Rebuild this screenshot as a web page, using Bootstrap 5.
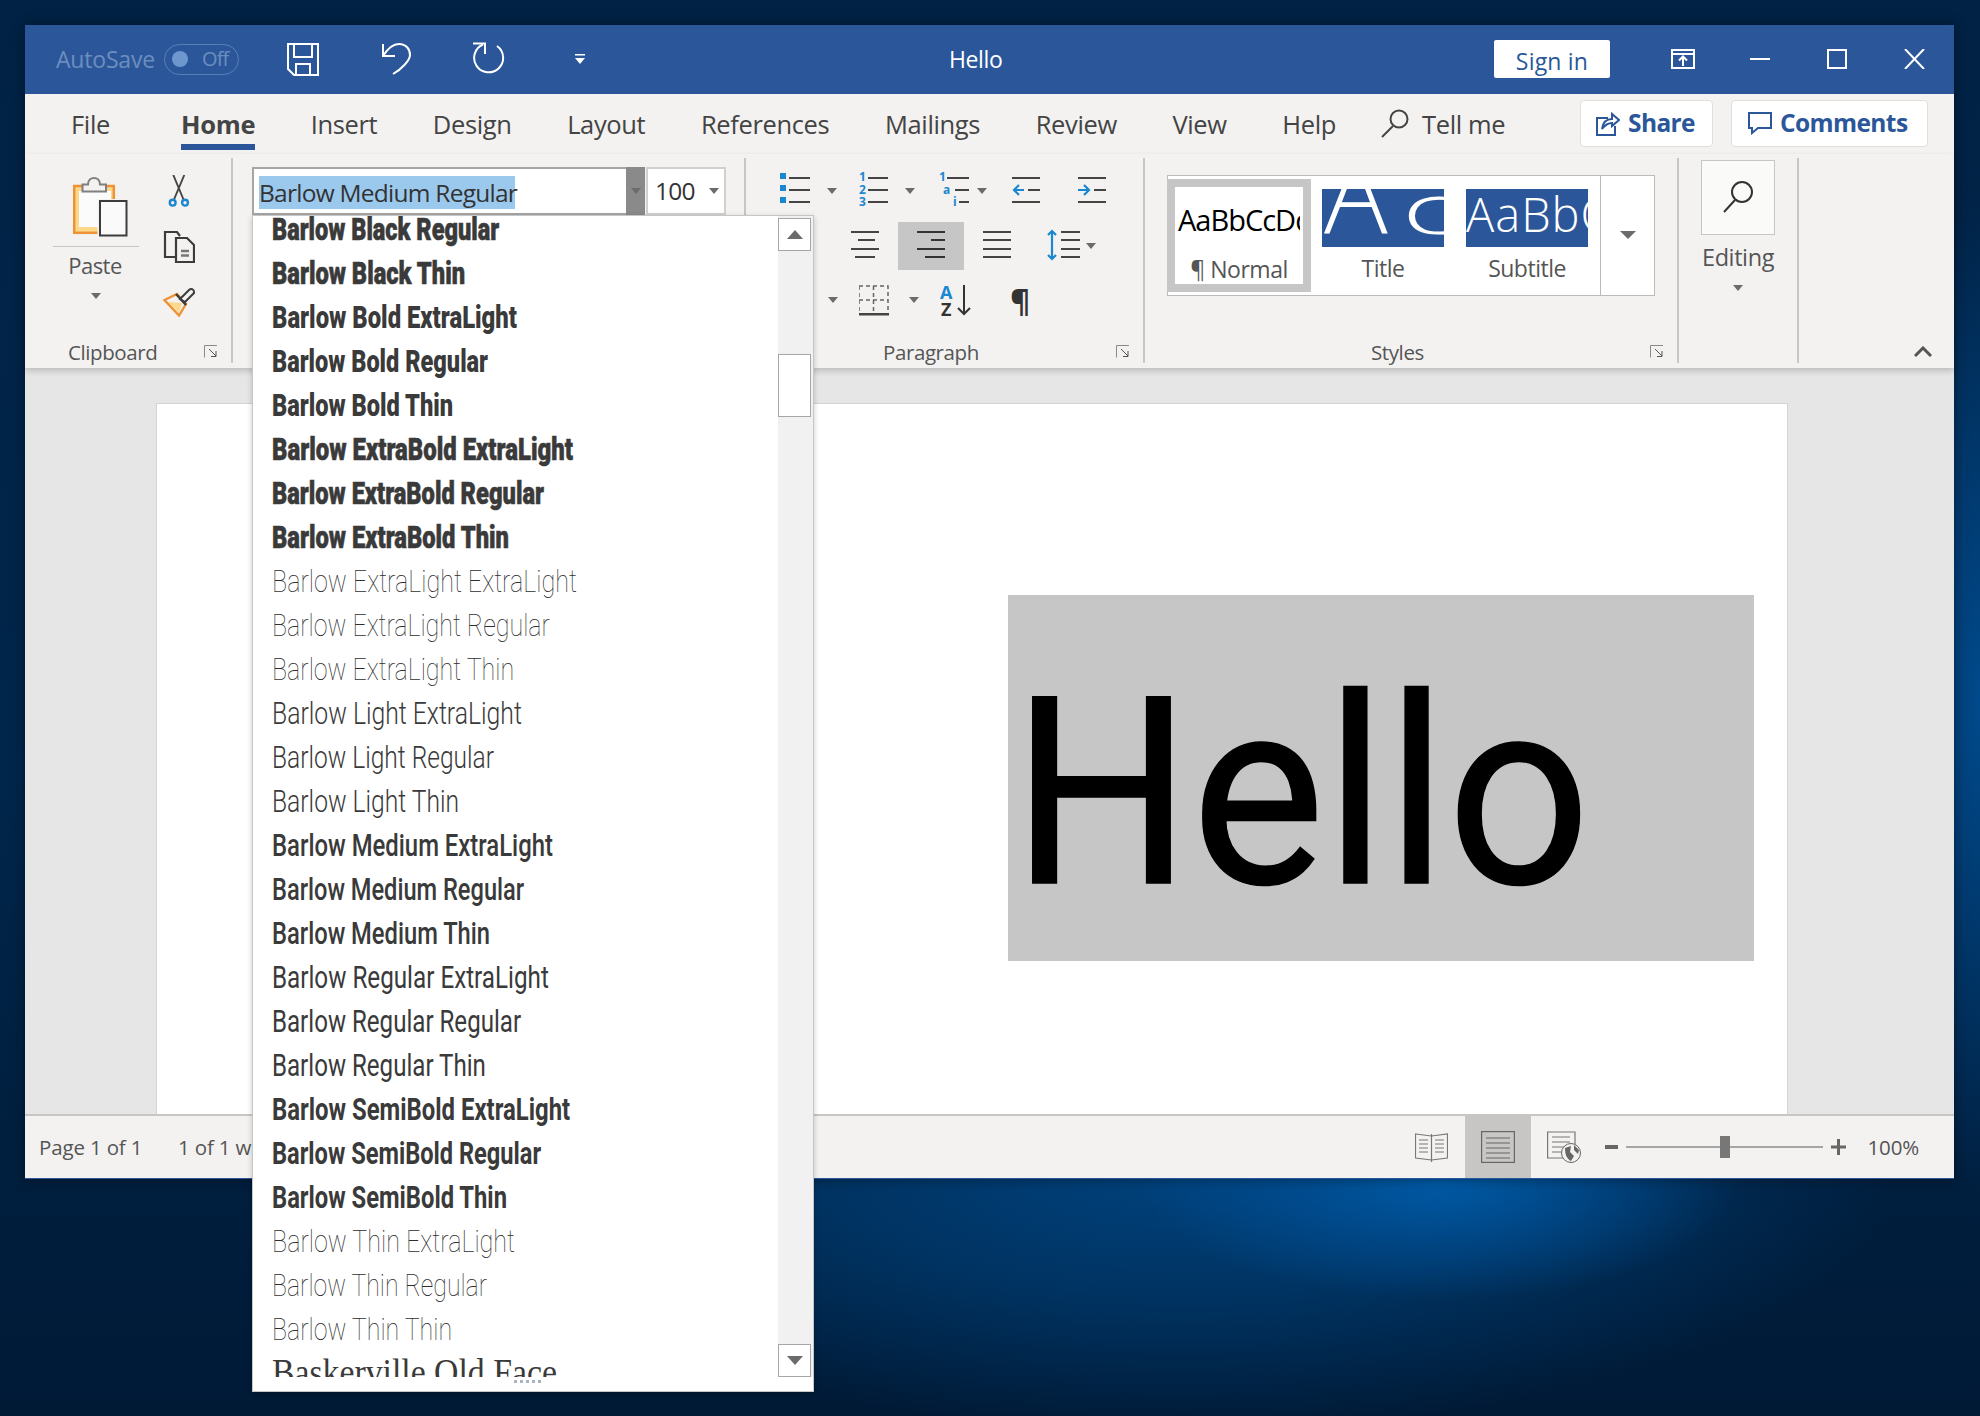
<!doctype html>
<html lang="en"><head>
<meta charset="utf-8"/>
<title>Hello - Word</title>
<link href="https://cdn.jsdelivr.net/npm/bootstrap@5.3.2/dist/css/bootstrap.min.css" rel="stylesheet">
<style>
html,body{height:100%}
body{width:1980px;height:1416px;overflow:hidden;padding:25px 26px 0 25px;font-family:"Open Sans","Noto Sans",sans-serif;color:#444;
 background:
  radial-gradient(ellipse 300px 120px at 1440px 1180px,#005aa6 0%,rgba(0,85,160,.55) 50%,rgba(0,70,135,0) 100%),
  radial-gradient(ellipse 720px 260px at 1180px 1170px,rgba(0,66,125,1) 0%,rgba(0,58,110,.75) 50%,rgba(0,40,80,0) 100%),
  radial-gradient(ellipse 110px 500px at 1980px 700px,#004a8c 0%,rgba(0,60,120,0) 100%),
  linear-gradient(180deg,#012245 0%,#00264b 55%,#001a36 100%)}
.wd-window{position:relative;height:1154px;background:#f3f2f1;box-shadow:0 0 12px rgba(0,0,0,.4);border-bottom:1px solid #2b579a}
.wd-title{height:69px;background:#2b579a;color:#fff}
.auto-txt{margin-left:31px;width:108px;font-size:23px;letter-spacing:-.2px;color:#6c8ebf;white-space:nowrap}
.auto-tog{width:75px;height:31px;border:1px solid #5a7fb5;border-radius:16px;color:#6c8ebf;font-size:20px;letter-spacing:-.9px;padding-left:7px}
.auto-dot{width:16px;height:16px;border-radius:50%;background:#6d97cd;margin-right:14px}
.qat-1{margin-left:48px}.qat-2{margin-left:63px}.qat-3{margin-left:61px}.qat-4{margin-left:69px}
.doc-name{margin-left:364px;width:545px;font-size:23px;letter-spacing:-.4px}
.signin{width:116px;height:38px;background:#fff;color:#2b579a;border-radius:2px;font-size:23px;letter-spacing:.2px;line-height:43px}
.tb-ctl-1{margin-left:61px}.tb-ctl-2{margin-left:55px}.tb-ctl-3{margin-left:57px}.tb-ctl-4{margin-left:57px}
.wd-tabs{height:60px;font-size:25.500px;letter-spacing:-.35px}
.wd-tab{height:56px;line-height:60px;border-bottom:6px solid transparent;margin-left:55.500px;color:#444}
.wd-tab.first{margin-left:46px}
.wd-tab.second{margin-left:71px}
.wd-tab.active{font-weight:700;border-bottom-color:#2b579a;letter-spacing:-.3px}
.tell-ico{margin:0 13px 0 45px}
.top-btn{height:47px;margin-top:6px;background:#fff;border:1px solid #e1dfdd;border-radius:4px;color:#2b579a;font-weight:700;font-size:24.5px;letter-spacing:-.6px}
.share-b{width:133px;margin-left:auto;margin-right:18px;padding-left:14px}
.comm-b{width:197px;margin-right:26px;padding-left:16px}
.wd-ribbon{height:214px;padding:4px 0 5px;box-shadow:0 3px 6px rgba(0,0,0,.18);position:relative}
.rb-group{border-right:2px solid #c8c6c4;flex:none}
.rb-body{flex:1 1 auto;min-height:0}
.rb-foot{height:20px;margin-bottom:1px;font-size:20.500px;line-height:20px;letter-spacing:-.4px;color:#555;padding-right:13px;align-items:center}
.launch{margin-left:auto}
.g-clip{width:208px}.g-font{width:513px}.g-para{width:399px}.g-style{width:534px}.g-edit{width:120px}
.f-clip{padding-left:43px}.f-para{padding-left:137px}.f-style{padding-left:226px}
.paste-col{width:86px;margin-left:28px;padding-top:19px;font-size:22px;letter-spacing:-.5px;color:#555}
.paste-col hr{width:86px;margin:8px 0 7px;opacity:1;border-color:#c8c6c4}
.paste-lab{margin-left:-2px}
.clip-col{margin-left:24px;padding-top:17px;gap:23px}
.rb-caret{width:0;height:0;border-left:5px solid transparent;border-right:5px solid transparent;border-top:6px solid #6b6b6b}
.paste-col .rb-caret{margin-top:17px}
.font-box{margin:9px 0 0 19px;height:48px}
.font-name{width:374px;height:48px;background:#fff;border:2px solid #a6a6a6;border-right:0;padding:6px 0 0 5px;font-size:24.5px;letter-spacing:-.75px;color:#333}
.font-sel{background:#9bc9ee;display:inline-block;height:33px;line-height:33px;width:256px;white-space:nowrap}
.font-drop{width:19px;background:#8a8a8a}
.font-size{width:80px;margin-left:1px;background:#fff;border:2px solid #d0d0d0;font-size:24.5px;letter-spacing:-.8px;color:#333;padding:0 5px 0 7px}
.p-row1{margin:13px 0 0 34px;height:36px}
.p-row2{margin:15px 0 0 105px;height:48px}
.p-row3{margin:13px 0 0 82px;height:34px}
.pilcrow{font-size:31px;line-height:34px;font-weight:700;color:#333;margin-left:38px}
.svg-txt{font-family:"Open Sans",sans-serif;font-weight:700}
.gallery{width:488px;height:121px;margin:17px 0 0 22px;background:#fff;border:1px solid #bdbbb9}
.tile{flex:none;color:#555;text-align:center}
.tile-sel{width:144px;height:113px;margin:3px 0 0 -1px;border:8px solid #c6c6c6;overflow:hidden}
.smp-normal{height:56px;line-height:66px;font-size:29px;letter-spacing:-1px;color:#000;white-space:nowrap;overflow:hidden;margin:0 3px;text-align:left}
.tile-lab{font-size:23px;letter-spacing:-.5px;line-height:30px}
.tile-sel .tile-lab{margin-top:11px}
.tile-title{width:122px;margin:13px 0 0 11px}
.tile-sub{width:122px;margin:13px 0 0 22px}
.smp-box{height:58px;background:#2b579a;color:#fff;overflow:hidden;white-space:nowrap;text-align:left;font-weight:300;margin-bottom:6px}
.smp-title{font-size:106px;line-height:4px;padding-left:2px;padding-top:2px}
.smp-title span{display:inline-block;font-size:70px;transform:scaleX(1.700);transform-origin:0 100%;margin-left:14px}
.smp-sub{font-size:47px;line-height:50px;letter-spacing:1px;font-weight:300}
.more-b{width:55px;margin-left:12px;border-left:1px solid #bdbbb9}
.more-b .rb-caret{border-left-width:8px;border-right-width:8px;border-top-width:8px}
.edit-btn{width:74px;height:75px;background:#fafaf9;border:1px solid #c6c6c6;margin-top:2px}
.edit-lab{font-size:23.500px;letter-spacing:-.4px;margin-top:6px;color:#555;line-height:32px}
.edit-col .rb-caret{margin-top:12px}
.g-last{padding:0 22px 6px 0}
.wd-doc{height:747px;background:#e6e6e6;overflow:hidden}
.wd-page{height:712px;margin:35px 166px 0 131px;background:#fff;border:1px solid #d4d4d4;border-bottom:0;padding:191px 33px 0 0}
.hello-bg{width:746px;height:366px;background:#c6c6c6;color:#000;font-family:Roboto,"Liberation Sans",sans-serif;font-weight:400;font-size:262px;line-height:366px;padding-left:4px;overflow:hidden}
.hello-bg span{display:inline-block;transform:scaleX(.96);transform-origin:0 50%;margin-top:16px;-webkit-text-stroke:1.500px #000}
.wd-status{height:64px;border-top:2px solid #c8c6c4;font-size:20.500px;letter-spacing:-.15px;color:#555}
.st-page{margin-left:14px;width:139px}
.st-act{width:66px;height:62px;background:#c8c6c4}
.st-read{margin-right:17px}
.st-web{margin:0 24px 0 16px}
.zoom-track{width:197px;height:2px;margin:0 8px;background:#a6a6a6;position:relative}
.zoom-thumb{position:absolute;left:94px;top:-10px;width:10px;height:22px;background:#777}
.zoom-pct{margin:0 35px 0 21px}
.font-list{position:absolute;left:227px;top:190px;width:562px;height:1177px;background:#fff;border:1px solid #c6c6c6;box-shadow:0 2px 6px rgba(0,0,0,.2)}
.fl-pane{height:1161px}
.fl-rows{flex:1 1 auto;overflow:hidden;margin:0;padding:0 0 0 19px;list-style:none}
.fl-rows li{height:44px;line-height:44px;white-space:nowrap;color:#3a3a3a;font-family:Roboto,sans-serif;font-size:32px}
.fl-rows li:first-child{margin-top:-9px}
.fl-rows li span{display:inline-block;transform-origin:0 50%}
.fl-rows li.fl-heavy span{-webkit-text-stroke:.6px #3a3a3a}
.fl-rows li.fl-thin{color:#2e2e2e}
.fl-rows li.fl-serif{font-family:"Liberation Serif",serif;font-size:37px}
.fl-bar{width:35px;background:#f1f1f1;padding:2px 2px 0 0;flex:none}
.sb-btn{height:33px;background:#fff;border:1px solid #a6a6a6;flex:none}
.sb-thumb{height:63px;background:#fff;border:1px solid #a6a6a6;margin:103px 0 auto}
.sb-up{width:0;height:0;border:8px solid transparent;border-top:0;border-bottom:9px solid #6b6b6b}
.sb-dn{width:0;height:0;border:8px solid transparent;border-bottom:0;border-top:9px solid #6b6b6b}
.fl-grip{height:14px;gap:3px;padding:3px 0 0 261px}
.fl-grip i{width:3px;height:3px;background:#a9b4c2}
</style>
</head><body>
<div class="wd-window d-flex flex-column">

  <div class="wd-title d-flex align-items-center flex-none">
    <div class="auto-txt">AutoSave</div>
    <div class="auto-tog d-flex align-items-center"><span class="auto-dot"></span>Off</div>
    <svg class="qat-1" width="32" height="33" viewBox="0 0 32 33" fill="none" stroke="#fff" stroke-width="2"><path d="M1 1H31V32H7L1 26Z"/><path d="M7 1V14H25V1"/><path d="M9 32V21H23V32"/></svg>
    <svg class="qat-2" width="29" height="34" viewBox="0 0 29 34" fill="none" stroke="#fff" stroke-width="2"><path d="M1 2V14H13"/><path d="M1 14C6 6 11 2 17 2C24 2 28 7 28 13C28 18 20 27 11 32"/></svg>
    <svg class="qat-3" width="34" height="34" viewBox="0 0 34 34" fill="none" stroke="#fff" stroke-width="2"><path d="M1 1.500H13V12"/><path d="M25 4A14.500 14.500 0 1 1 11 2.500"/></svg>
    <svg class="qat-4" width="10" height="10" viewBox="0 0 10 10" fill="#fff"><rect width="10" height="1.500"/><path d="M0 4H10L5 10Z"/></svg>
    <div class="doc-name">Hello</div>
    <div class="signin text-center">Sign in</div>
    <svg class="tb-ctl-1" width="24" height="20" viewBox="0 0 24 20" fill="none" stroke="#fff" stroke-width="2"><rect x="1" y="1" width="22" height="18"/><path d="M1 5H23M12 17V8M8 11.500L12 7.500L16 11.500"/></svg>
    <svg class="tb-ctl-2" width="20" height="2" viewBox="0 0 20 2"><rect width="20" height="2" fill="#fff"/></svg>
    <svg class="tb-ctl-3" width="20" height="20" viewBox="0 0 20 20" fill="none" stroke="#fff" stroke-width="2"><rect x="1" y="1" width="18" height="18"/></svg>
    <svg class="tb-ctl-4" width="21" height="20" viewBox="0 0 21 20" fill="none" stroke="#fff" stroke-width="2"><path d="M1 0L20 20M20 0L1 20"/></svg>
  </div>

  <div class="wd-tabs d-flex flex-none">
    <div class="wd-tab first">File</div>
    <div class="wd-tab second active">Home</div>
    <div class="wd-tab">Insert</div>
    <div class="wd-tab">Design</div>
    <div class="wd-tab">Layout</div>
    <div class="wd-tab">References</div>
    <div class="wd-tab">Mailings</div>
    <div class="wd-tab">Review</div>
    <div class="wd-tab">View</div>
    <div class="wd-tab">Help</div>
    <svg class="tell-ico align-self-center" width="28" height="30" viewBox="0 0 28 30" fill="none" stroke="#444" stroke-width="2"><circle cx="18" cy="10" r="8.500"/><path d="M12 17L1 28"/></svg>
    <div class="wd-tab ms-0">Tell me</div>
    <div class="top-btn share-b d-flex align-items-center gap-2">
      <svg width="25" height="28" viewBox="0 0 25 28" fill="none" stroke="#2b579a" stroke-width="2"><path d="M13 9H2V26H20V17"/><path d="M7 20C8 13 12 10 17 10V5L24 11L17 17V14C13 14 10 16 7 20Z"/></svg>Share
    </div>
    <div class="top-btn comm-b d-flex align-items-center gap-2">
      <svg width="24" height="24" viewBox="0 0 24 24" fill="none" stroke="#2b579a" stroke-width="2"><path d="M1 2H23V17H10L4 22V17H1Z"/></svg>Comments
    </div>
  </div>

  <div class="wd-ribbon d-flex flex-none">
    <div class="rb-group g-clip d-flex flex-column">
      <div class="rb-body d-flex">
        <div class="paste-col d-flex flex-column align-items-center">
          <svg width="55" height="61" viewBox="0 0 55 61" class="ms-2">
            <rect x="1.200" y="9" width="39.600" height="46.800" fill="#fbd88c" stroke="#ed9236" stroke-width="2.500"/>
            <rect x="6" y="14" width="32" height="36" fill="#fbfbfb"/>
            <path d="M9.500 14.500V7.500H15C15 3 18 1 21 1C24 1 27 3 27 7.500H33V14.500Z" fill="#f3f2f1" stroke="#7f7f7f" stroke-width="2"/>
            <rect x="24.500" y="22" width="30" height="38" fill="#f3f2f1"/>
            <rect x="27" y="24" width="26.500" height="34.500" fill="#fafafa" stroke="#3c3c3c" stroke-width="2"/>
          </svg>
          <hr>
          <div class="lh-1 paste-lab">Paste</div>
          <div class="rb-caret"></div>
        </div>
        <div class="clip-col d-flex flex-column align-items-center">
          <svg width="22" height="32" viewBox="0 0 22 32" fill="none"><path d="M5.300 0L15.500 24.500M16.300 0L6 24.500" stroke="#444" stroke-width="1.900"/><circle cx="4.700" cy="27.700" r="2.900" stroke="#1b87d0" stroke-width="2.400"/><circle cx="17" cy="27.700" r="2.900" stroke="#1b87d0" stroke-width="2.400"/></svg>
          <svg width="32" height="33" viewBox="0 0 32 33" fill="none" stroke="#3c3c3c" stroke-width="2.200"><path d="M12 27H2V2H14L17 6"/><path d="M13 8H24L31 15V32H13Z"/><path d="M18 21H26M18 25.500H26" stroke="#777" stroke-width="2.400"/></svg>
          <svg width="32" height="31" viewBox="0 0 32 31"><path d="M5 16L19 17L16 27Z" fill="#fbd88c"/><path d="M1.500 14L14 8L23 18L16 29.500Z" fill="none" stroke="#ed9236" stroke-width="2.400"/><path d="M17 13L26 4C28 2 31 3 31 6V7L22 16Z" fill="#f3f2f1" stroke="#3c3c3c" stroke-width="2"/><path d="M13 8L23 19" stroke="#3c3c3c" stroke-width="2.400"/></svg>
        </div>
      </div>
      <div class="rb-foot d-flex f-clip">Clipboard
        <svg class="launch" width="14" height="13" viewBox="0 0 14 13" fill="none" stroke="#8a8a8a"><path d="M13 .5H.5V12.500"/><path d="M5 4L12 11M12 6V11.500H7" stroke="#555"/></svg>
      </div>
    </div>

    <div class="rb-group g-font">
      <div class="font-box d-flex">
        <div class="font-name"><span class="font-sel">Barlow Medium Regular</span></div>
        <div class="font-drop d-flex align-items-center justify-content-center"><div class="rb-caret"></div></div>
        <div class="font-size d-flex align-items-center justify-content-between">100<div class="rb-caret"></div></div>
      </div>
    </div>

    <div class="rb-group g-para d-flex flex-column">
      <div class="rb-body">
        <div class="p-row1 d-flex">
          <svg width="78" height="36" viewBox="0 0 78 36"><g fill="#1b87d0"><rect y="2" width="6" height="6"/><rect y="14" width="6" height="6"/><rect y="26" width="6" height="6"/></g><g fill="#444"><rect x="9" y="6" width="21" height="2"/><rect x="9" y="18" width="21" height="2"/><rect x="9" y="30" width="21" height="2"/><path d="M47 17H57L52 23Z" fill="#6b6b6b"/></g></svg>
          <svg width="80" height="36" viewBox="0 0 80 36"><g class="svg-txt" fill="#1b87d0" font-size="12"><text x="1" y="10">1</text><text x="1" y="23">2</text><text x="1" y="35">3</text></g><g fill="#444"><rect x="10" y="6" width="20" height="2"/><rect x="10" y="18" width="20" height="2"/><rect x="10" y="30" width="20" height="2"/><path d="M47 17H57L52 23Z" fill="#6b6b6b"/></g></svg>
          <svg width="74" height="36" viewBox="0 0 74 36"><g class="svg-txt" fill="#1b87d0" font-size="12"><text x="1" y="10">1</text><text x="5" y="23">a</text><text x="15" y="35">i</text></g><g fill="#444"><rect x="9" y="6" width="22" height="2"/><rect x="17" y="18" width="14" height="2"/><rect x="21" y="30" width="10" height="2"/><path d="M39 17H49L44 23Z" fill="#6b6b6b"/></g></svg>
          <svg width="66" height="36" viewBox="0 0 66 36"><g fill="#444"><rect y="6" width="28" height="2"/><rect x="16" y="18" width="12" height="2"/><rect y="30" width="28" height="2"/></g><path d="M12 19H2M7 14L2 19L7 24" fill="none" stroke="#1b87d0" stroke-width="2.200"/></svg>
          <svg width="28" height="36" viewBox="0 0 28 36"><g fill="#444"><rect y="6" width="28" height="2"/><rect x="16" y="18" width="12" height="2"/><rect y="30" width="28" height="2"/></g><path d="M0 19H11M6 14L11 19L6 24" fill="none" stroke="#1b87d0" stroke-width="2.200"/></svg>
        </div>
        <div class="p-row2 d-flex">
          <svg width="47" height="48" viewBox="0 0 47 48" fill="#444"><rect y="9" width="28" height="2"/><rect x="7" y="17" width="17" height="2"/><rect y="26" width="28" height="2"/><rect x="4" y="34" width="20" height="2"/></svg>
          <svg width="66" height="48" viewBox="0 0 66 48"><rect width="66" height="48" fill="#c6c6c6"/><g fill="#333"><rect x="19" y="9" width="28" height="2"/><rect x="33" y="17" width="14" height="2"/><rect x="19" y="26" width="28" height="2"/><rect x="27" y="34" width="20" height="2"/></g></svg>
          <svg width="83" height="48" viewBox="0 0 83 48" fill="#444"><rect x="19" y="9" width="28" height="2"/><rect x="19" y="17" width="28" height="2"/><rect x="19" y="26" width="28" height="2"/><rect x="19" y="34" width="28" height="2"/></svg>
          <svg width="50" height="48" viewBox="0 0 50 48"><path d="M5 9V37M1 13L5 9L9 13M1 33L5 37L9 33" fill="none" stroke="#1b87d0" stroke-width="2.200"/><g fill="#444"><rect x="14" y="9" width="19" height="2"/><rect x="14" y="17" width="19" height="2"/><rect x="14" y="26" width="19" height="2"/><rect x="14" y="34" width="19" height="2"/></g><path d="M39 21H49L44 27Z" fill="#6b6b6b"/></svg>
        </div>
        <div class="p-row3 d-flex">
          <svg width="31" height="34" viewBox="0 0 31 34"><path d="M0 14H10L5 20Z" fill="#6b6b6b"/></svg>
          <svg width="50" height="34" viewBox="0 0 50 34"><path d="M0 3H29V31M0 3V31M0 17H29M14.500 3V31" fill="none" stroke="#666" stroke-width="1.500" stroke-dasharray="4 3"/><rect y="30" width="30" height="2.500" fill="#444"/></svg>
          <svg width="31" height="34" viewBox="0 0 31 34"><path d="M0 14H10L5 20Z" fill="#6b6b6b"/></svg>
          <svg width="32" height="34" viewBox="0 0 32 34"><g class="svg-txt" font-size="18"><text x="0" y="16" fill="#1b87d0">A</text><text x="1" y="33" fill="#333">Z</text></g><path d="M24 2V31M18 25L24 31L30 25" fill="none" stroke="#333" stroke-width="2"/></svg>
          <div class="pilcrow">¶</div>
        </div>
      </div>
      <div class="rb-foot d-flex f-para">Paragraph
        <svg class="launch" width="14" height="13" viewBox="0 0 14 13" fill="none" stroke="#8a8a8a"><path d="M13 .5H.5V12.500"/><path d="M5 4L12 11M12 6V11.500H7" stroke="#555"/></svg>
      </div>
    </div>

    <div class="rb-group g-style d-flex flex-column">
      <div class="rb-body">
        <div class="gallery d-flex">
          <div class="tile tile-sel">
            <div class="smp-normal">AaBbCcDd</div>
            <div class="tile-lab">¶ Normal</div>
          </div>
          <div class="tile tile-title">
            <div class="smp-box smp-title">A<span>c</span></div>
            <div class="tile-lab">Title</div>
          </div>
          <div class="tile tile-sub">
            <div class="smp-box smp-sub">AaBbCc</div>
            <div class="tile-lab">Subtitle</div>
          </div>
          <div class="more-b d-flex align-items-center justify-content-center"><div class="rb-caret"></div></div>
        </div>
      </div>
      <div class="rb-foot d-flex f-style">Styles
        <svg class="launch" width="14" height="13" viewBox="0 0 14 13" fill="none" stroke="#8a8a8a"><path d="M13 .5H.5V12.500"/><path d="M5 4L12 11M12 6V11.500H7" stroke="#555"/></svg>
      </div>
    </div>

    <div class="rb-group g-edit edit-col d-flex flex-column align-items-center">
      <div class="edit-btn d-flex align-items-center justify-content-center">
        <svg width="30" height="32" viewBox="0 0 30 32" fill="none" stroke="#333" stroke-width="2"><circle cx="19" cy="11" r="10"/><path d="M12 19L1 31"/></svg>
      </div>
      <div class="edit-lab">Editing</div>
      <div class="rb-caret"></div>
    </div>

    <div class="g-last flex-grow-1 d-flex justify-content-end align-items-end">
      <svg width="18" height="11" viewBox="0 0 18 11" fill="none" stroke="#555" stroke-width="3"><path d="M1 10L9 2L17 10"/></svg>
    </div>
  </div>

  <div class="wd-doc flex-none">
    <div class="wd-page d-flex justify-content-end">
      <div class="hello-bg"><span>Hello</span></div>
    </div>
  </div>

  <div class="wd-status d-flex align-items-center flex-none">
    <div class="st-page">Page 1 of 1</div>
    <div class="text-nowrap">1 of 1 word</div>
    <div class="ms-auto d-flex align-items-center">
      <svg class="st-read" width="33" height="30" viewBox="0 0 33 30" fill="none" stroke="#777" stroke-width="1.200"><path d="M.5 2L16.500 4L32.500 2V26L16.500 28L.5 26Z"/><path d="M16.500 2V30M4 8H13M4 12H13M4 16H13M4 20H13M20 8H29M20 12H29M20 16H29M20 20H29"/></svg>
      <div class="st-act d-flex align-items-center justify-content-center">
        <svg width="34" height="32" viewBox="0 0 34 32" fill="none" stroke="#666" stroke-width="1.200"><rect x=".6" y=".6" width="32.800" height="30.800"/><path d="M5 7H29M5 12H29M5 17H29M5 22H29M5 27H29"/></svg>
      </div>
      <svg class="st-web" width="34" height="32" viewBox="0 0 34 32"><path d="M28 18V1H.6V27H18" fill="none" stroke="#777" stroke-width="1.200"/><path d="M5 6H23M5 11H23M5 16H18M5 21H14" stroke="#777" stroke-width="1.200"/><circle cx="24" cy="22" r="9.500" fill="#f3f2f1" stroke="#666"/><path d="M18 17L24 15L23 21L27 25L24 30C20 28 18 24 18 17ZM27 14L32 19L31 23L27 19Z" fill="#666"/></svg>
      <svg width="13" height="4" viewBox="0 0 13 4"><rect width="13" height="4" fill="#666"/></svg>
      <div class="zoom-track"><div class="zoom-thumb"></div></div>
      <svg width="15" height="16" viewBox="0 0 15 16" fill="#666"><rect y="6.500" width="15" height="3"/><rect x="6" width="3" height="16"/></svg>
      <div class="zoom-pct">100%</div>
    </div>
  </div>

  <div class="font-list">
    <div class="fl-pane d-flex">
      <ul class="fl-rows" id="fontRows"></ul>
      <div class="fl-bar d-flex flex-column">
        <div class="sb-btn d-flex align-items-center justify-content-center"><div class="sb-up"></div></div>
        <div class="sb-thumb"></div>
        <div class="sb-btn d-flex align-items-center justify-content-center"><div class="sb-dn"></div></div>
      </div>
    </div>
    <div class="fl-grip d-flex"><i></i><i></i><i></i><i></i><i></i></div>
  </div>
</div>

<script src="https://cdn.jsdelivr.net/npm/bootstrap@5.3.2/dist/js/bootstrap.bundle.min.js"></script>
<script>
// name, weight, row class, width in px the original (condensed) face takes
const fonts = [
  ['Barlow Black Regular',900,'fl-heavy',227],['Barlow Black Thin',900,'fl-heavy',193],['Barlow Bold ExtraLight',900,'',245],
  ['Barlow Bold Regular',900,'',216],['Barlow Bold Thin',900,'',181],['Barlow ExtraBold ExtraLight',900,'fl-heavy',301],
  ['Barlow ExtraBold Regular',900,'fl-heavy',272],['Barlow ExtraBold Thin',900,'fl-heavy',237],['Barlow ExtraLight ExtraLight',100,'fl-thin',305],
  ['Barlow ExtraLight Regular',100,'fl-thin',278],['Barlow ExtraLight Thin',100,'fl-thin',242],['Barlow Light ExtraLight',300,'',250],
  ['Barlow Light Regular',300,'',222],['Barlow Light Thin',300,'',187],['Barlow Medium ExtraLight',500,'',281],
  ['Barlow Medium Regular',500,'',252],['Barlow Medium Thin',500,'',218],['Barlow Regular ExtraLight',400,'',277],
  ['Barlow Regular Regular',400,'',249],['Barlow Regular Thin',400,'',214],['Barlow SemiBold ExtraLight',700,'',298],
  ['Barlow SemiBold Regular',700,'',269],['Barlow SemiBold Thin',700,'',235],['Barlow Thin ExtraLight',100,'fl-thin',243],
  ['Barlow Thin Regular',100,'fl-thin',215],['Barlow Thin Thin',100,'fl-thin',180],['Baskerville Old Face',400,'fl-serif',285]
];
const list = document.getElementById('fontRows');
fonts.forEach(([name, weight, cls, w]) => {
  const li = document.createElement('li');
  const s = document.createElement('span');
  if (cls) li.className = cls;
  s.textContent = name;
  s.style.fontWeight = weight;
  li.appendChild(s);
  list.appendChild(li);
  s.style.transform = 'scaleX(' + (w / s.getBoundingClientRect().width).toFixed(3) + ')';
});
</script>
</body></html>
